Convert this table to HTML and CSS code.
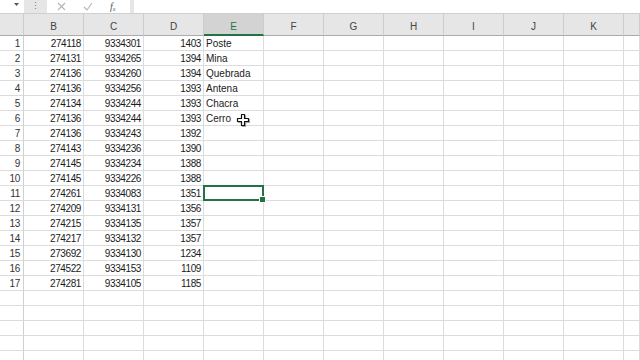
FILE: index.html
```html
<!DOCTYPE html>
<html>
<head>
<meta charset="utf-8">
<link rel="stylesheet" href="styles.css">
</head>
<body>
<div class="bar">
  <div class="namebox"><svg class="dd" width="5" height="3" viewBox="0 0 5 3"><path d="M0 0h5L2.5 3z" fill="#555"/></svg></div>
  <div class="grip">⋮</div>
  <div class="btns">
    <svg width="9" height="9" viewBox="0 0 9 9"><path d="M1 1L8 8M8 1L1 8" stroke="#b4b4b4" stroke-width="1.1" fill="none"/></svg>
    <svg width="10" height="9" viewBox="0 0 10 9"><path d="M1 5L4 8L9 1" stroke="#b4b4b4" stroke-width="1.1" fill="none"/></svg>
    <span class="fx">f<sub>x</sub></span>
  </div>
  <div class="gap"></div>
  <div class="formula"></div>
</div>
<div class="sheet">
  <div class="h corner"></div><div class="h">B</div><div class="h">C</div><div class="h">D</div><div class="h hs">E</div><div class="h">F</div><div class="h">G</div><div class="h">H</div><div class="h">I</div><div class="h">J</div><div class="h">K</div><div class="h"></div>

  <div class="r">1</div><div class="c">274118</div><div class="c">9334301</div><div class="c">1403</div><div class="c t">Poste</div><div class="c"></div><div class="c"></div><div class="c"></div><div class="c"></div><div class="c"></div><div class="c"></div><div class="c"></div>
  <div class="r">2</div><div class="c">274131</div><div class="c">9334265</div><div class="c">1394</div><div class="c t">Mina</div><div class="c"></div><div class="c"></div><div class="c"></div><div class="c"></div><div class="c"></div><div class="c"></div><div class="c"></div>
  <div class="r">3</div><div class="c">274136</div><div class="c">9334260</div><div class="c">1394</div><div class="c t">Quebrada</div><div class="c"></div><div class="c"></div><div class="c"></div><div class="c"></div><div class="c"></div><div class="c"></div><div class="c"></div>
  <div class="r">4</div><div class="c">274136</div><div class="c">9334256</div><div class="c">1393</div><div class="c t">Antena</div><div class="c"></div><div class="c"></div><div class="c"></div><div class="c"></div><div class="c"></div><div class="c"></div><div class="c"></div>
  <div class="r">5</div><div class="c">274134</div><div class="c">9334244</div><div class="c">1393</div><div class="c t">Chacra</div><div class="c"></div><div class="c"></div><div class="c"></div><div class="c"></div><div class="c"></div><div class="c"></div><div class="c"></div>
  <div class="r">6</div><div class="c">274136</div><div class="c">9334244</div><div class="c">1393</div><div class="c t">Cerro</div><div class="c"></div><div class="c"></div><div class="c"></div><div class="c"></div><div class="c"></div><div class="c"></div><div class="c"></div>
  <div class="r">7</div><div class="c">274136</div><div class="c">9334243</div><div class="c">1392</div><div class="c t"></div><div class="c"></div><div class="c"></div><div class="c"></div><div class="c"></div><div class="c"></div><div class="c"></div><div class="c"></div>
  <div class="r">8</div><div class="c">274143</div><div class="c">9334236</div><div class="c">1390</div><div class="c t"></div><div class="c"></div><div class="c"></div><div class="c"></div><div class="c"></div><div class="c"></div><div class="c"></div><div class="c"></div>
  <div class="r">9</div><div class="c">274145</div><div class="c">9334234</div><div class="c">1388</div><div class="c t"></div><div class="c"></div><div class="c"></div><div class="c"></div><div class="c"></div><div class="c"></div><div class="c"></div><div class="c"></div>
  <div class="r">10</div><div class="c">274145</div><div class="c">9334226</div><div class="c">1388</div><div class="c t"></div><div class="c"></div><div class="c"></div><div class="c"></div><div class="c"></div><div class="c"></div><div class="c"></div><div class="c"></div>
  <div class="r">11</div><div class="c">274261</div><div class="c">9334083</div><div class="c">1351</div><div class="c t sel"></div><div class="c"></div><div class="c"></div><div class="c"></div><div class="c"></div><div class="c"></div><div class="c"></div><div class="c"></div>
  <div class="r">12</div><div class="c">274209</div><div class="c">9334131</div><div class="c">1356</div><div class="c t"></div><div class="c"></div><div class="c"></div><div class="c"></div><div class="c"></div><div class="c"></div><div class="c"></div><div class="c"></div>
  <div class="r">13</div><div class="c">274215</div><div class="c">9334135</div><div class="c">1357</div><div class="c t"></div><div class="c"></div><div class="c"></div><div class="c"></div><div class="c"></div><div class="c"></div><div class="c"></div><div class="c"></div>
  <div class="r">14</div><div class="c">274217</div><div class="c">9334132</div><div class="c">1357</div><div class="c t"></div><div class="c"></div><div class="c"></div><div class="c"></div><div class="c"></div><div class="c"></div><div class="c"></div><div class="c"></div>
  <div class="r">15</div><div class="c">273692</div><div class="c">9334130</div><div class="c">1234</div><div class="c t"></div><div class="c"></div><div class="c"></div><div class="c"></div><div class="c"></div><div class="c"></div><div class="c"></div><div class="c"></div>
  <div class="r">16</div><div class="c">274522</div><div class="c">9334153</div><div class="c">1109</div><div class="c t"></div><div class="c"></div><div class="c"></div><div class="c"></div><div class="c"></div><div class="c"></div><div class="c"></div><div class="c"></div>
  <div class="r">17</div><div class="c">274281</div><div class="c">9334105</div><div class="c">1185</div><div class="c t"></div><div class="c"></div><div class="c"></div><div class="c"></div><div class="c"></div><div class="c"></div><div class="c"></div><div class="c"></div>
  <div class="r"></div><div class="c"></div><div class="c"></div><div class="c"></div><div class="c"></div><div class="c"></div><div class="c"></div><div class="c"></div><div class="c"></div><div class="c"></div><div class="c"></div><div class="c"></div>
  <div class="r"></div><div class="c"></div><div class="c"></div><div class="c"></div><div class="c"></div><div class="c"></div><div class="c"></div><div class="c"></div><div class="c"></div><div class="c"></div><div class="c"></div><div class="c"></div>
  <div class="r"></div><div class="c"></div><div class="c"></div><div class="c"></div><div class="c"></div><div class="c"></div><div class="c"></div><div class="c"></div><div class="c"></div><div class="c"></div><div class="c"></div><div class="c"></div>
  <div class="r"></div><div class="c"></div><div class="c"></div><div class="c"></div><div class="c"></div><div class="c"></div><div class="c"></div><div class="c"></div><div class="c"></div><div class="c"></div><div class="c"></div><div class="c"></div>
  <div class="r"></div><div class="c"></div><div class="c"></div><div class="c"></div><div class="c"></div><div class="c"></div><div class="c"></div><div class="c"></div><div class="c"></div><div class="c"></div><div class="c"></div><div class="c"></div>
</div>
<svg class="cursor" width="15" height="15" viewBox="0 0 15 15"><path d="M5.5 1.5h3v4h4v3h-4v4h-3v-4h-4v-3h4z" fill="#fff" stroke="#111" stroke-width="1.2" stroke-linejoin="round"/></svg>
</body>
</html>
```

FILE: styles.css
```css
* { box-sizing: border-box; margin: 0; padding: 0; }
html, body { background: #fff; }
body {
  width: 640px;
  height: 360px;
  overflow: hidden;
  position: relative;
  font-family: "Liberation Sans", Arial, sans-serif;
  font-size: 10px;
  color: #1a1a1a;
}
.bar {
  display: flex;
  height: 14px;
  background: #e6e6e6;
  border-bottom: 1px solid #cfcfcf;
}
.namebox {
  width: 24px;
  height: 13px;
  background: #fff;
  display: flex;
  justify-content: flex-end;
  align-items: flex-start;
  padding: 3px 5px 0 0;
}
.grip {
  width: 23px;
  height: 13px;
  display: flex;
  justify-content: center;
  align-items: center;
  color: #777;
  font-size: 9px;
  line-height: 1;
}
.btns {
  width: 83px;
  height: 13px;
  background: #fff;
  display: flex;
  align-items: center;
  gap: 17px;
  padding-left: 10px;
}
.fx {
  font-family: "Liberation Serif", serif;
  font-style: italic;
  font-size: 10px;
  color: #555;
  line-height: 1;
}
.fx sub { font-size: 6px; vertical-align: -1px; }
.gap { width: 4px; }
.formula { flex: 1; height: 13px; background: #fff; }

.sheet {
  display: grid;
  grid-template-columns: 24px repeat(10, 60px) 16px;
  grid-template-rows: 22px;
  grid-auto-rows: 15px;
  width: 640px;
}
.h {
  background: #e6e6e6;
  border-right: 1px solid #cccccc;
  border-bottom: 1px solid #ababab;
  color: #444;
  display: flex;
  justify-content: center;
  align-items: flex-end;
  padding-bottom: 3px;
  line-height: 11px;
}
.hs {
  background: #d3d3d3;
  color: #217346;
  border-bottom: 2px solid #217346;
  padding-bottom: 2px;
}
.r {
  border-right: 1px solid #d0d0d0;
  border-bottom: 1px solid #dcdcdc;
  text-align: right;
  padding-right: 3px;
  line-height: 15px;
  color: #333;
  letter-spacing: -0.3px;
}
.c {
  border-right: 1px solid #dcdcdc;
  border-bottom: 1px solid #dcdcdc;
  text-align: right;
  padding-right: 2px;
  line-height: 15px;
  white-space: nowrap;
  overflow: hidden;
  letter-spacing: -0.4px;
}
.t { text-align: left; padding-left: 2px; letter-spacing: 0; }
.sel { position: relative; overflow: visible; }
.sel::after {
  content: "";
  position: absolute;
  top: -1px;
  left: -1px;
  right: -1px;
  bottom: -1px;
  border: 2px solid #217346;
}
.sel::before {
  content: "";
  position: absolute;
  right: -3px;
  bottom: -3px;
  width: 5px;
  height: 5px;
  background: #217346;
  border: 1px solid #fff;
  z-index: 1;
}
.cursor {
  position: absolute;
  left: 236px;
  top: 113px;
  filter: drop-shadow(1px 1px 0.5px rgba(0,0,0,0.35));
}
```
